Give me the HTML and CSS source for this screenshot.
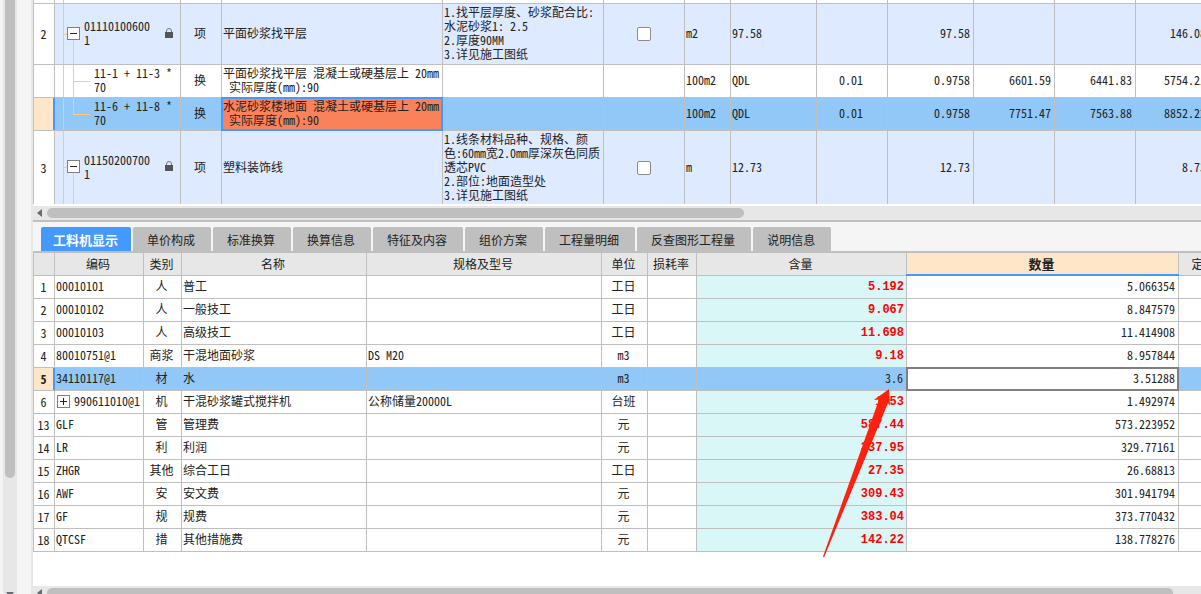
FILE: index.html
```html
<!DOCTYPE html>
<html lang="zh-CN">
<head>
<meta charset="utf-8">
<title>工料机显示</title>
<link rel="stylesheet" href="styles.css">
</head>
<body>
<div class="shell">
  <aside class="rail">
    <div class="rail-track">
      <div class="rail-thumb"></div>
      <svg class="rail-arrow" width="8" height="5" viewBox="0 0 8 5"><path d="M0 0h8L4 5z" fill="#666a73"/></svg>
    </div>
  </aside>
  <main class="main">
    <section class="pane">
      <table class="grid items">
        <colgroup>
          <col class="w21"><col class="w126"><col class="w41"><col class="w221"><col class="w161"><col class="w81"><col class="w46"><col class="w86"><col class="w71"><col class="w86"><col class="w81"><col class="w81"><col class="w74">
        </colgroup>
        <tbody>
          <tr class="sliver"><td></td><td class="node"></td><td></td><td></td><td></td><td></td><td></td><td></td><td></td><td></td><td></td><td></td><td></td></tr>
          <tr class="bill">
            <td class="no">2</td>
            <td class="node parent"><div class="tree"><button class="toggle" aria-label="折叠"><svg width="9" height="9" viewBox="0 0 9 9"><path d="M1 4.500h7" stroke="#222"/></svg></button><span class="code">01110100600<br>1</span><svg class="lock" width="8" height="11" viewBox="0 0 8 11"><path d="M1.500 5V3a2.500 2.500 0 0 1 5 0v2" fill="none" stroke="#777"/><path d="M0 4h8v6H0z" fill="#555"/></svg></div></td>
            <td class="mid">项</td>
            <td>平面砂浆找平层</td>
            <td>1.找平层厚度、砂浆配合比:<br>水泥砂浆1: 2.5<br>2.厚度90MM<br>3.详见施工图纸</td>
            <td class="check"><input class="tick" type="checkbox" aria-label="平面砂浆找平层"></td>
            <td>m2</td><td>97.58</td><td></td><td class="num">97.58</td><td></td><td></td><td class="num">146.08</td>
          </tr>
          <tr class="norm">
            <td class="no"></td>
            <td class="node child"><div class="formula">11-1 + 11-3 *<br>70</div></td>
            <td class="mid">换</td>
            <td>平面砂浆找平层 混凝土或硬基层上 20mm<br>&nbsp;实际厚度(mm):90</td>
            <td></td><td></td><td>100m2</td><td>QDL</td><td class="mid">0.01</td><td class="num">0.9758</td><td class="num">6601.59</td><td class="num">6441.83</td><td class="num">5754.21</td>
          </tr>
          <tr class="norm selected">
            <td class="no"></td>
            <td class="node child last"><div class="formula">11-6 + 11-8 *<br>70</div></td>
            <td class="mid">换</td>
            <td class="current">水泥砂浆楼地面 混凝土或硬基层上 20mm<br>&nbsp;实际厚度(mm):90</td>
            <td></td><td></td><td>100m2</td><td>QDL</td><td class="mid">0.01</td><td class="num">0.9758</td><td class="num">7751.47</td><td class="num">7563.88</td><td class="num">8852.22</td>
          </tr>
          <tr class="bill tail">
            <td class="no">3</td>
            <td class="node parent"><div class="tree"><button class="toggle" aria-label="折叠"><svg width="9" height="9" viewBox="0 0 9 9"><path d="M1 4.500h7" stroke="#222"/></svg></button><span class="code">01150200700<br>1</span><svg class="lock" width="8" height="11" viewBox="0 0 8 11"><path d="M1.500 5V3a2.500 2.500 0 0 1 5 0v2" fill="none" stroke="#777"/><path d="M0 4h8v6H0z" fill="#555"/></svg></div></td>
            <td class="mid">项</td>
            <td>塑料装饰线</td>
            <td>1.线条材料品种、规格、颜<br>色:60mm宽2.0mm厚深灰色同质<br>透芯PVC<br>2.部位:地面造型处<br>3.详见施工图纸</td>
            <td class="check"><input class="tick" type="checkbox" aria-label="塑料装饰线"></td>
            <td>m</td><td>12.73</td><td></td><td class="num">12.73</td><td></td><td></td><td class="num">8.73</td>
          </tr>
        </tbody>
      </table>
    </section>
    <div class="hscroll"><svg class="left-arrow" width="5" height="8" viewBox="0 0 5 8"><path d="M5 0v8L0 4z" fill="#666a73"/></svg><div class="track"><div class="thumb thumb-items"></div></div></div>
    <nav class="tabs" role="tablist">
      <button class="tab active" role="tab" aria-selected="true">工料机显示</button>
      <button class="tab" role="tab">单价构成</button>
      <button class="tab" role="tab">标准换算</button>
      <button class="tab" role="tab">换算信息</button>
      <button class="tab" role="tab">特征及内容</button>
      <button class="tab" role="tab">组价方案</button>
      <button class="tab" role="tab">工程量明细</button>
      <button class="tab" role="tab">反查图形工程量</button>
      <button class="tab" role="tab">说明信息</button>
    </nav>
    <section class="pane detail">
      <table class="grid resources">
        <colgroup>
          <col class="w21"><col class="w89"><col class="w38"><col class="w185"><col class="w235"><col class="w46"><col class="w49"><col class="w210"><col class="w272"><col class="w64">
        </colgroup>
        <thead>
          <tr><th></th><th>编码</th><th>类别</th><th>名称</th><th>规格及型号</th><th>单位</th><th>损耗率</th><th>含量</th><th class="sorted">数量</th><th>定额价</th></tr>
        </thead>
        <tbody>
          <tr><td class="no">1</td><td>00010101</td><td class="mid">人</td><td>普工</td><td></td><td class="mid">工日</td><td></td><td class="qty">5.192</td><td class="num">5.066354</td><td></td></tr>
          <tr><td class="no">2</td><td>00010102</td><td class="mid">人</td><td>一般技工</td><td></td><td class="mid">工日</td><td></td><td class="qty">9.067</td><td class="num">8.847579</td><td></td></tr>
          <tr><td class="no">3</td><td>00010103</td><td class="mid">人</td><td>高级技工</td><td></td><td class="mid">工日</td><td></td><td class="qty">11.698</td><td class="num">11.414908</td><td></td></tr>
          <tr><td class="no">4</td><td>80010751@1</td><td class="mid">商浆</td><td>干混地面砂浆</td><td>DS M20</td><td class="mid">m3</td><td></td><td class="qty">9.18</td><td class="num">8.957844</td><td></td></tr>
          <tr class="selected"><td class="no">5</td><td>34110117@1</td><td class="mid">材</td><td>水</td><td></td><td class="mid">m3</td><td></td><td class="num">3.6</td><td class="num editing">3.51288</td><td></td></tr>
          <tr><td class="no">6</td><td><div class="expand"><button class="toggle" aria-label="展开"><svg width="9" height="9" viewBox="0 0 9 9"><path d="M1 4.500h7M4.500 1v7" stroke="#222"/></svg></button>990611010@1</div></td><td class="mid">机</td><td>干混砂浆罐式搅拌机</td><td>公称储量20000L</td><td class="mid">台班</td><td></td><td class="qty">1.53</td><td class="num">1.492974</td><td></td></tr>
          <tr><td class="no">13</td><td>GLF</td><td class="mid">管</td><td>管理费</td><td></td><td class="mid">元</td><td></td><td class="qty">587.44</td><td class="num">573.223952</td><td></td></tr>
          <tr><td class="no">14</td><td>LR</td><td class="mid">利</td><td>利润</td><td></td><td class="mid">元</td><td></td><td class="qty">337.95</td><td class="num">329.77161</td><td></td></tr>
          <tr><td class="no">15</td><td>ZHGR</td><td class="mid">其他</td><td>综合工日</td><td></td><td class="mid">工日</td><td></td><td class="qty">27.35</td><td class="num">26.68813</td><td></td></tr>
          <tr><td class="no">16</td><td>AWF</td><td class="mid">安</td><td>安文费</td><td></td><td class="mid">元</td><td></td><td class="qty">309.43</td><td class="num">301.941794</td><td></td></tr>
          <tr><td class="no">17</td><td>GF</td><td class="mid">规</td><td>规费</td><td></td><td class="mid">元</td><td></td><td class="qty">383.04</td><td class="num">373.770432</td><td></td></tr>
          <tr><td class="no">18</td><td>QTCSF</td><td class="mid">措</td><td>其他措施费</td><td></td><td class="mid">元</td><td></td><td class="qty">142.22</td><td class="num">138.778276</td><td></td></tr>
        </tbody>
      </table>
      <svg class="pointer" width="68" height="169" viewBox="0 0 68 169"><path d="M66 0L51 11L56 10.500L0 167.500L1 168.500L65 14L67 17z" fill="#ff2010"/></svg>
    </section>
    <div class="hscroll"><svg class="left-arrow" width="5" height="8" viewBox="0 0 5 8"><path d="M5 0v8L0 4z" fill="#666a73"/></svg><div class="track"><div class="thumb thumb-resources"></div></div></div>
  </main>
</div>
</body>
</html>
```

FILE: styles.css
```css
* { box-sizing: border-box; }

html, body { height: 100%; }

body {
  margin: 0;
  overflow: hidden;
  background: #f5f5f5;
  color: #222;
  font: 12px/14px "Noto Sans CJK SC", sans-serif;
  font-feature-settings: "hwid";
}

button {
  margin: 0;
  padding: 0;
  border: 0;
  font: inherit;
  font-feature-settings: inherit;
  color: inherit;
}

.shell {
  display: grid;
  grid-template-columns: 33px minmax(0, 1fr);
  min-height: 100%;
}

/* outer vertical scrollbar */
.rail {
  display: flex;
  padding-left: 3px;
  border-right: 2px solid #e7e7e7;
}
.rail-track {
  display: flex;
  flex-direction: column;
  justify-content: space-between;
  align-items: center;
  width: 14px;
  padding-bottom: 3px;
  background: #e7e7e7;
}
.rail-thumb {
  width: 10px;
  height: 80%;
  border-radius: 0 0 5px 5px;
  background: #bfbfbf;
}

.main { background: #fff; }

.pane {
  position: relative;
  overflow: hidden;
}

/* grids */
.grid {
  table-layout: fixed;
  width: 0;
  border-collapse: separate;
  border-spacing: 0;
  border-left: 1px solid #bfbfbf;
}
.grid td, .grid th {
  padding: 0 3px 2px 1px;
  border-right: 1px solid #bfbfbf;
  border-bottom: 1px solid #bfbfbf;
  white-space: nowrap;
  font-weight: normal;
}
.items { margin-bottom: 2px; }
.resources { margin-bottom: 34px; }

.w21 { width: 21px; }
.w38 { width: 38px; }
.w41 { width: 41px; }
.w46 { width: 46px; }
.w49 { width: 49px; }
.w64 { width: 64px; }
.w71 { width: 71px; }
.w74 { width: 74px; }
.w81 { width: 81px; }
.w86 { width: 86px; }
.w89 { width: 89px; }
.w126 { width: 126px; }
.w161 { width: 161px; }
.w185 { width: 185px; }
.w210 { width: 210px; }
.w221 { width: 221px; }
.w235 { width: 235px; }
.w272 { width: 272px; }

.grid .no { padding: 0 1px 0 0; text-align: center; background: #fff; }
.grid .check { padding: 0; }
.grid .mid { text-align: center; }
.grid .num { text-align: right; }
.grid .qty {
  padding: 0 2px 0 0;
  text-align: right;
  background: #daf7f7;
  color: #f00;
  font-family: "Liberation Mono", monospace;
  font-weight: bold;
}

.grid .sliver td { height: 4px; padding: 0; }
.bill td { height: 61px; background-color: #ddeaff; }
.norm td { height: 33px; }
.tail td { height: 73px; border-bottom: 0; }
.grid .tail td { border-bottom: 0; }
.resources th, .resources td { height: 23px; }
.resources th { background: #e7e7e7; }
.grid th { padding: 0 2px 0 0; }
.resources .sorted {
  position: relative;
  background: #ffe6c8;
  font-size: 13px;
  font-weight: bold;
}
.resources .sorted::after {
  content: "";
  position: absolute;
  inset: auto -1px -1px;
  height: 2px;
  background: #4499ff;
}

.grid .selected td { background-color: #91c8f7; }
.grid .selected .no {
  position: relative;
  background: #ffe6c8;
  font-weight: bold;
}
.selected .no::after {
  content: "";
  position: absolute;
  inset: 0 -1px 0 auto;
  width: 2px;
  background: #4499ff;
}
.grid .selected .current { position: relative; background: #fa825a; }
.grid .selected .editing { position: relative; background: #fff; }
.current::after, .editing::after {
  content: "";
  position: absolute;
  inset: -1px;
  border: 2px solid #4499ff;
}
.editing::after { border-color: #7f7f7f; }

/* tree connectors */
.grid .node {
  --line: linear-gradient(#ffc880, #ffc880);
  padding: 0 0 2px;
  background-image: var(--line);
  background-position: 8px 0;
  background-size: 1px 100%;
  background-repeat: no-repeat;
}
.grid .parent {
  background-image: var(--line), var(--line), var(--line);
  background-position: 8px 0, 8px 50%, 18px 100%;
  background-size: 1px 100%, 5px 1px, 1px 50%;
}
.grid .child {
  background-image: var(--line), var(--line), var(--line);
  background-position: 8px 0, 18px 50%, 18px 0;
  background-size: 1px 100%, 17px 1px, 1px 100%;
}
.grid .last { background-size: 1px 100%, 17px 1px, 1px 50%; }

.tree {
  display: flex;
  align-items: center;
  padding: 0 7px 0 12px;
}
.tree .code { margin-left: 4px; }
.lock { margin-left: auto; }
.formula { padding-left: 39px; }
.expand { display: flex; align-items: center; gap: 4px; padding-left: 1px; }

.toggle {
  display: grid;
  place-items: center;
  flex: none;
  width: 13px;
  height: 13px;
  border: 1px solid #7f7f7f;
  background: #fff;
}

.tick {
  appearance: none;
  display: block;
  width: 14px;
  height: 14px;
  margin: 0 auto;
  border: 1px solid #8c8c8c;
  border-radius: 2px;
  background: #fff;
}

/* horizontal scrollbars */
.hscroll {
  display: flex;
  align-items: center;
  gap: 5px;
  height: 14px;
  padding-left: 4px;
  background: #e7e7e7;
}
.track { flex: 1; }
.thumb {
  height: 10px;
  border-radius: 5px;
  background: #bfbfbf;
}
.thumb-items { width: 60.4%; }
.thumb-resources { width: 97.6%; }

/* tabs */
.tabs {
  display: flex;
  gap: 2px;
  padding: 5px 8px 0;
  border-top: 2px solid #bfbfbf;
  border-bottom: 2px solid #bfbfbf;
  background: #f5f5f5;
}
.tab {
  height: 24px;
  padding: 2px 16px 0 14px;
  border-radius: 2px 2px 0 0;
  background: #bfbfbf;
  white-space: nowrap;
}
.tab.active {
  padding: 2px 13px 0 12px;
  background: #4499ff;
  color: #fff;
  font-size: 13px;
  font-weight: bold;
}

.pointer {
  position: absolute;
  left: 790px;
  top: 136px;
}
```
